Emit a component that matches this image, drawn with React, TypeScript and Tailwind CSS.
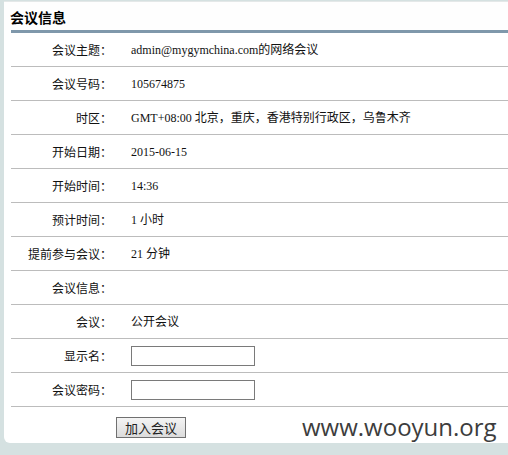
const rows: { label: string; value?: string; input?: boolean }[] = [
  { label: "会议主题：", value: "admin@mygymchina.com的网络会议" },
  { label: "会议号码：", value: "105674875" },
  { label: "时区：", value: "GMT+08:00 北京，重庆，香港特别行政区，乌鲁木齐" },
  { label: "开始日期：", value: "2015-06-15" },
  { label: "开始时间：", value: "14:36" },
  { label: "预计时间：", value: "1 小时" },
  { label: "提前参与会议：", value: "21 分钟" },
  { label: "会议信息：" },
  { label: "会议：", value: "公开会议" },
  { label: "显示名：", input: true },
  { label: "会议密码：", input: true },
];

const App = () => {
  return (
    <div className="relative w-[508px] h-[455px] overflow-hidden bg-[#d5e1e1] pt-[1px] pl-[4px] font-['Liberation_Serif','Noto_Sans_CJK_SC',serif] text-black">
      <div className="h-[442px] bg-white rounded-bl-[6px] border-t border-[#e4e8e8]">
        <div className="h-[28px] bg-[#fefefe] flex items-center pl-[6px] pt-[2px] text-[14px] font-bold font-['Noto_Sans_CJK_SC',sans-serif]">
          会议信息
        </div>
        <div className="ml-[7px] border-t-[3px] border-[#7f98ab]">
          {rows.map((r) => (
            <div key={r.label} className="h-[34px] flex items-center border-b border-[#bcbcbc]">
              <div className="w-[101px] text-right text-[12px] font-['Noto_Sans_CJK_SC',sans-serif] text-[#111]">
                {r.label}
              </div>
              <div className="ml-[19px] text-[12px] text-[#111]">
                {r.input ? (
                  <div className="w-[124px] h-[20px] border border-[#7a7a7a] bg-white" />
                ) : (
                  r.value
                )}
              </div>
            </div>
          ))}
          <div className="pt-[9px] pl-[105px]">
            <button className="w-[70px] h-[21px] border border-[#707070] bg-gradient-to-b from-[#f4f4f4] to-[#dcdcdc] text-[13px] text-[#222] font-['Noto_Sans_CJK_SC',sans-serif] leading-none">
              加入会议
            </button>
          </div>
        </div>
      </div>
      <div className="absolute left-[302px] top-[409px] text-[24px] text-[#3d3d3d] font-['Open_Sans',sans-serif]">
        www.wooyun.org
      </div>
    </div>
  );
};

export default App;
